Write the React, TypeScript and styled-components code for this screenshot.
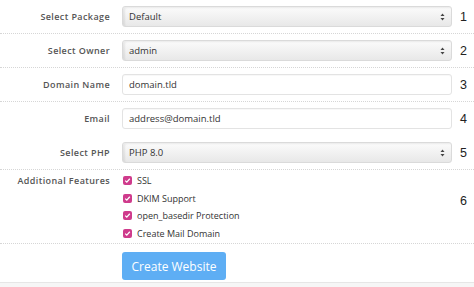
import { memo } from "react";
import styled, { createGlobalStyle } from "styled-components";

const GlobalStyle = createGlobalStyle`
  html, body {
    margin: 0;
    padding: 0;
    background: #fff;
    font-family: "Open Sans", "Liberation Sans", sans-serif;
  }
`;

const Form = styled.div`
  width: 474px;
  height: 287px;
  display: flex;
  flex-direction: column;
  overflow: hidden;
`;

const Row = styled.div<{ $divider?: boolean }>`
  display: grid;
  grid-template-columns: 122px 330px 22px;
  align-items: center;
  padding: 6px 0;
  border-bottom: 1px dotted ${(p) => (p.$divider ? "#d6d6d6" : "transparent")};
`;

const TallRow = styled(Row)`
  align-items: start;
  padding: 2px 0 1px;
`;

const Label = styled.div<{ $top?: number }>`
  text-align: right;
  padding-right: 12px;
  font-size: 9px;
  font-weight: 600;
  letter-spacing: 0.4px;
  color: #555;
  white-space: nowrap;
  margin-top: ${(p) => p.$top ?? 0}px;
`;

const SelectBox = styled.div`
  box-sizing: border-box;
  height: 21px;
  display: flex;
  align-items: center;
  justify-content: space-between;
  padding: 0 6px;
  border: 1px solid #dadada;
  border-radius: 3px;
  background: linear-gradient(#fbfbfb, #e8e8e8);
  box-shadow: inset 2px 1px 2px rgba(0, 0, 0, 0.07);
  font-size: 9.5px;
  color: #333;
`;

const TextBox = styled.div`
  box-sizing: border-box;
  height: 21px;
  display: flex;
  align-items: center;
  padding: 0 6px;
  border: 1px solid #e3e3e3;
  border-radius: 3px;
  background: #fff;
  box-shadow: inset 0 1px 1px rgba(0, 0, 0, 0.03);
  font-size: 9.5px;
  color: #333;
`;

const Num = styled.div<{ $top?: number }>`
  font-family: "Liberation Sans", Arial, sans-serif;
  font-size: 12.5px;
  color: #222;
  padding-left: 8px;
  margin-top: ${(p) => p.$top ?? 0}px;
`;

const Checks = styled.div`
  display: flex;
  flex-direction: column;
`;

const CheckItem = styled.div`
  display: flex;
  align-items: center;
  gap: 5px;
  height: 17.5px;
  padding-left: 1px;
  font-size: 9px;
  color: #333;
`;

const Box = styled.span`
  width: 9px;
  height: 9px;
  border-radius: 2px;
  background: #cf3b8c;
  display: flex;
  align-items: center;
  justify-content: center;
`;

const ButtonRow = styled.div`
  display: grid;
  grid-template-columns: 122px 330px;
  padding: 8px 0 2px;
`;

const CreateButton = styled.button`
  grid-column: 2;
  width: 104px;
  height: 28px;
  border: none;
  border-radius: 3px;
  background: #5eaef4;
  color: #fff;
  font-family: "Open Sans", "Liberation Sans", sans-serif;
  font-size: 12px;
  cursor: pointer;
`;

const Footer = styled.div`
  flex: 1;
  border-top: 1px solid #e6e6e6;
  background: #f6f6f6;
`;

const Arrows = () => (
  <svg width="5" height="8" viewBox="0 0 5 8">
    <path d="M2.5 0.5 L4.5 3 L0.5 3 Z" fill="#444" />
    <path d="M2.5 7.5 L4.5 5 L0.5 5 Z" fill="#444" />
  </svg>
);

const Check = () => (
  <svg width="7" height="7" viewBox="0 0 7 7">
    <path d="M1.2 3.6 L2.8 5.1 L5.8 1.8" stroke="#fff" strokeWidth="1.3" fill="none" />
  </svg>
);

const features = ["SSL", "DKIM Support", "open_basedir Protection", "Create Mail Domain"];

const App = memo(() => (
  <Form>
    <GlobalStyle />
    <Row $divider>
      <Label>Select Package</Label>
      <SelectBox>Default<Arrows /></SelectBox>
      <Num>1</Num>
    </Row>
    <Row $divider>
      <Label>Select Owner</Label>
      <SelectBox>admin<Arrows /></SelectBox>
      <Num>2</Num>
    </Row>
    <Row $divider>
      <Label>Domain Name</Label>
      <TextBox>domain.tld</TextBox>
      <Num>3</Num>
    </Row>
    <Row>
      <Label>Email</Label>
      <TextBox>address@domain.tld</TextBox>
      <Num>4</Num>
    </Row>
    <Row $divider>
      <Label>Select PHP</Label>
      <SelectBox>PHP 8.0<Arrows /></SelectBox>
      <Num>5</Num>
    </Row>
    <TallRow $divider>
      <Label $top={2}>Additional Features</Label>
      <Checks>
        {features.map((f) => (
          <CheckItem key={f}>
            <Box><Check /></Box>
            {f}
          </CheckItem>
        ))}
      </Checks>
      <Num $top={22}>6</Num>
    </TallRow>
    <ButtonRow>
      <CreateButton>Create Website</CreateButton>
    </ButtonRow>
    <Footer />
  </Form>
));

export default App;
